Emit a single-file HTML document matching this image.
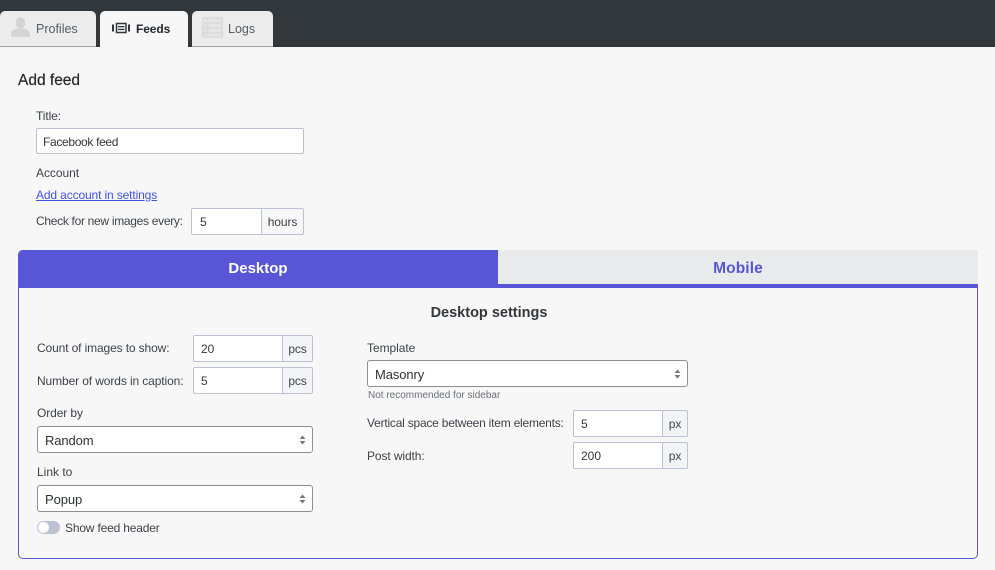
<!DOCTYPE html>
<html><head><meta charset="utf-8"><style>
html,body{margin:0;padding:0}
body{width:995px;height:570px;overflow:hidden;background:#f7f7f7;position:relative;font-family:"Liberation Sans",sans-serif;font-size:12px;color:#3c434a}
div,span,a{position:absolute;box-sizing:border-box;white-space:nowrap}
.t{line-height:16px;height:16px}
.tab{background:#ececec;top:11px;height:36px;border-radius:5px 5px 0 0;border-bottom:1px solid #a3a3a3}
.in{background:#fff;border:1px solid #bcc1d3;border-radius:2px;height:27px;line-height:25px;padding-top:1px;color:#32373c;padding-left:7px}
.ad{background:#f3f4f7;border:1px solid #bcc1d3;border-left:0;border-radius:0 2px 2px 0;height:27px;line-height:25px;padding-top:1px;text-align:center;color:#3c434a;letter-spacing:-.1px}
.sel{background:#fff;border:1px solid #8c8f94;border-radius:3px;height:27px;line-height:25px;padding-top:1px;padding-left:7px;font-size:13px;letter-spacing:-.1px;color:#2c3338}
.ar{right:6px;top:8px;width:7px;height:10px}
</style></head><body>
<div style="left:0;top:0;width:995px;height:47px;background:#32373c"></div>
<div class="tab" style="left:0;width:96px"></div>
<div class="tab" style="left:100px;width:88px;background:#f7f7f7;border-bottom:0;height:36px"></div>
<div class="tab" style="left:192px;width:81px"></div>
<svg style="position:absolute;left:11px;top:17px" width="19" height="20" viewBox="0 0 19 20"><ellipse cx="9.500" cy="5.800" rx="4.800" ry="5.600" fill="#d4d4d4"/><path d="M0 20v-3.500c0-2.500 3-4 6-5h7c3 1 6 2.500 6 5V20z" fill="#d4d4d4"/></svg>
<svg style="position:absolute;left:111px;top:22px" width="20" height="12" viewBox="0 0 20 12"><path d="M1 2.500h2v7H1zM17 2.500h2v7h-2z" fill="#32373c"/><rect x="5.500" y="1.500" width="9.500" height="9" fill="none" stroke="#32373c" stroke-width="1.500"/><rect x="7" y="4" width="6.500" height="1.300" fill="#32373c"/><rect x="7" y="6.800" width="6.500" height="1.300" fill="#32373c"/></svg>
<svg style="position:absolute;left:202px;top:17px" width="21" height="21" viewBox="0 0 21 21"><rect width="21" height="21" fill="#dcdcdc"/><path d="M2 2h2.500v3H2zM6.500 2H19v3H6.500zM2 7h2.500v3H2zM6.500 7H19v3H6.500zM2 12h2.500v3H2zM6.500 12H19v3H6.500zM2 16.500h2.500v3H2zM6.500 16.500H19v3H6.500z" fill="#e6e6e6"/></svg>
<span class="t" style="left:36px;top:21px;color:#555d66;font-size:12.500px">Profiles</span>
<span class="t" style="left:136px;top:21px;font-weight:bold;color:#23282d;letter-spacing:-.1px">Feeds</span>
<span class="t" style="left:228px;top:21px;color:#555d66;font-size:12.500px">Logs</span>
<span style="left:18px;top:72px;font-size:15.500px;line-height:18px;color:#23282d;-webkit-text-stroke:.2px #23282d">Add feed</span>
<span class="t" style="left:36px;top:108px;letter-spacing:-.1px">Title:</span>
<div class="in" style="left:36px;top:128px;width:268px;height:26px;line-height:24px;padding-left:6px;letter-spacing:-.33px">Facebook feed</div>
<span class="t" style="left:36px;top:165px;letter-spacing:-.05px">Account</span>
<a class="t" style="left:36px;top:187px;color:#4353e6;text-decoration:underline;letter-spacing:-.13px">Add account in settings</a>
<span class="t" style="left:36px;top:213px;letter-spacing:-.3px">Check for new images every:</span>
<div class="in" style="left:191px;top:208px;width:71px;border-radius:2px 0 0 2px;padding-left:8px">5</div>
<div class="ad" style="left:262px;top:208px;width:42px;background:#f7f7f7">hours</div>
<div style="left:18px;top:250px;width:960px;height:309px;border:1px solid #5856d6;border-radius:5px"></div>
<div style="left:498px;top:250px;width:480px;height:34px;background:#e9eaec;border-radius:0 5px 0 0"></div>
<div style="left:18px;top:284px;width:960px;height:4px;background:#5856d6"></div>
<div style="left:18px;top:250px;width:480px;height:38px;background:#5856d6;border-radius:5px 0 0 0;color:#fff;font-weight:bold;font-size:15px;line-height:37px;text-align:center">Desktop</div>
<div style="left:498px;top:250px;width:480px;height:34px;color:#5856d6;font-weight:bold;font-size:15.500px;line-height:37px;text-align:center;letter-spacing:.1px">Mobile</div>
<div style="left:18px;top:304px;width:942px;font-size:14.500px;font-weight:bold;line-height:18px;text-align:center;color:#32373c">Desktop settings</div>
<span class="t" style="left:37px;top:340px;letter-spacing:-.125px">Count of images to show:</span>
<div class="in" style="left:193px;top:335px;width:90px;border-radius:2px 0 0 2px">20</div>
<div class="ad" style="left:283px;top:335px;width:30px">pcs</div>
<span class="t" style="left:37px;top:373px;letter-spacing:-.11px">Number of words in caption:</span>
<div class="in" style="left:193px;top:367px;width:90px;border-radius:2px 0 0 2px">5</div>
<div class="ad" style="left:283px;top:367px;width:30px">pcs</div>
<span class="t" style="left:37px;top:405px;letter-spacing:-.1px">Order by</span>
<div class="sel" style="left:37px;top:426px;width:276px">Random<svg class="ar" style="position:absolute" viewBox="0 0 7 10"><path d="M3.500 0.500L6.500 4H0.500zM3.500 9.500L6.500 6H0.500z" fill="#777"/></svg></div>
<span class="t" style="left:37px;top:464px">Link to</span>
<div class="sel" style="left:37px;top:485px;width:276px">Popup<svg class="ar" style="position:absolute" viewBox="0 0 7 10"><path d="M3.500 0.500L6.500 4H0.500zM3.500 9.500L6.500 6H0.500z" fill="#777"/></svg></div>
<div style="left:37px;top:521px;width:23px;height:13px;border-radius:7px;background:#bcc1d3"></div>
<div style="left:38px;top:522px;width:11px;height:11px;border-radius:50%;background:#fff"></div>
<span class="t" style="left:65px;top:520px;letter-spacing:-.18px">Show feed header</span>
<span class="t" style="left:367px;top:340px;letter-spacing:-.05px">Template</span>
<div class="sel" style="left:367px;top:360px;width:321px">Masonry<svg class="ar" style="position:absolute" viewBox="0 0 7 10"><path d="M3.500 0.500L6.500 4H0.500zM3.500 9.500L6.500 6H0.500z" fill="#777"/></svg></div>
<span class="t" style="left:368px;top:388px;font-size:10px;color:#6c7078">Not recommended for sidebar</span>
<span class="t" style="left:367px;top:415px;letter-spacing:-.22px">Vertical space between item elements:</span>
<div class="in" style="left:573px;top:410px;width:90px;border-radius:2px 0 0 2px">5</div>
<div class="ad" style="left:663px;top:410px;width:25px">px</div>
<span class="t" style="left:367px;top:448px;letter-spacing:-.1px">Post width:</span>
<div class="in" style="left:573px;top:442px;width:90px;border-radius:2px 0 0 2px">200</div>
<div class="ad" style="left:663px;top:442px;width:25px">px</div>
</body></html>
